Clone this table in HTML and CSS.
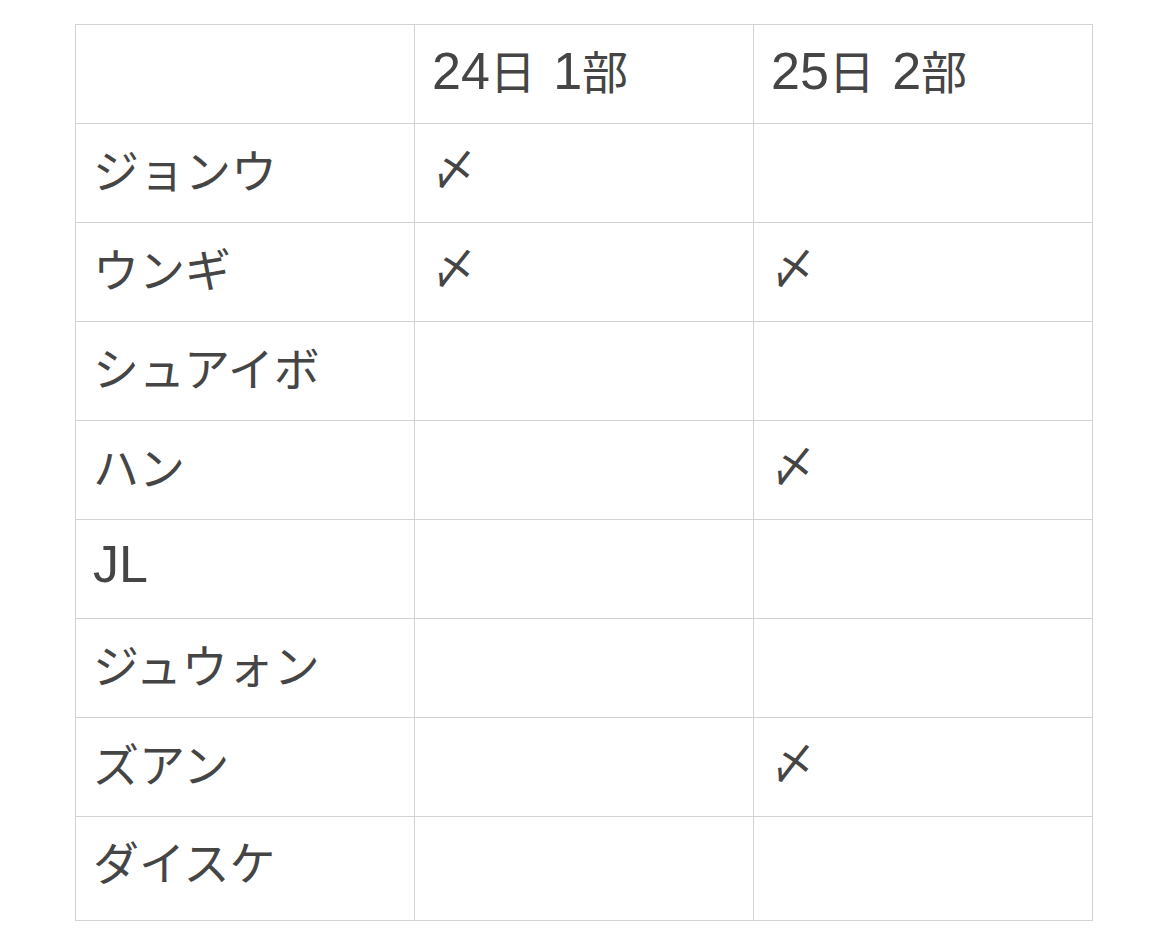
FILE: index.html
```html
<!DOCTYPE html>
<html lang="ja">
<head>
<meta charset="utf-8">
<link rel="stylesheet" href="styles.css">
</head>
<body>
<table class="grid">
  <tr class="head"><td></td><td><span class="lat">24</span>日 <span class="lat">1</span>部</td><td><span class="lat">25</span>日 <span class="lat">2</span>部</td></tr>
  <tr><td>ジョンウ</td><td class="mark">〆</td><td></td></tr>
  <tr><td>ウンギ</td><td class="mark">〆</td><td class="mark">〆</td></tr>
  <tr><td>シュアイボ</td><td></td><td></td></tr>
  <tr><td>ハン</td><td></td><td class="mark">〆</td></tr>
  <tr><td><span class="lat">JL</span></td><td></td><td></td></tr>
  <tr><td>ジュウォン</td><td></td><td></td></tr>
  <tr><td>ズアン</td><td></td><td class="mark">〆</td></tr>
  <tr class="last"><td>ダイスケ</td><td></td><td></td></tr>
</table>
</body>
</html>
```
FILE: styles.css
```css
html, body {
  margin: 0;
  padding: 0;
  background: #ffffff;
}
body {
  padding: 24px 0 0 75px;
}
.grid {
  border-collapse: collapse;
  table-layout: fixed;
  width: 1017px;
  font-family: "Noto Sans CJK JP", "Noto Sans", sans-serif;
  font-size: 46px;
  color: #454545;
}
.grid td {
  width: 339px;
  height: 99px;
  border: 1px solid #d3d3d3;
  padding: 0 0 10px 17px;
  vertical-align: middle;
  box-sizing: border-box;
  line-height: 1;
}
.grid tr.head td {
  padding-bottom: 6px;
  word-spacing: 7px;
}
.grid tr.last td {
  height: 104px;
  padding-bottom: 18px;
}
.grid td.mark {
  font-size: 44px;
  padding-bottom: 14px;
}
.lat {
  font-family: "Liberation Sans", Arial, sans-serif;
  font-size: 52px;
}
```
